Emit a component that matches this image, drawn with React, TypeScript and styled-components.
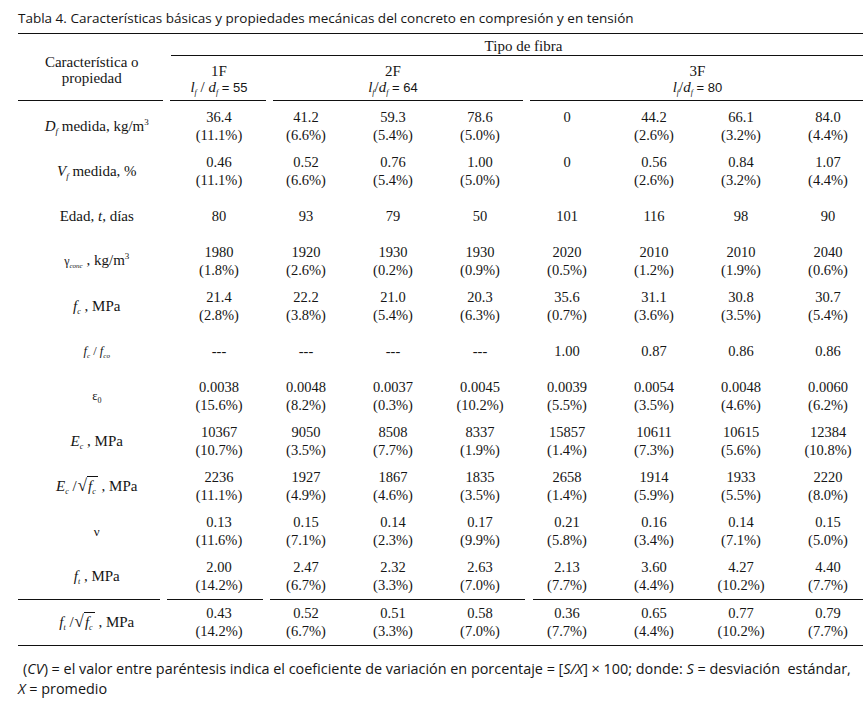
import React from "react";
import styled, { createGlobalStyle } from "styled-components";

const GlobalStyle = createGlobalStyle`
  html, body { margin: 0; padding: 0; background: #fff; }
  body {
    width: 863px;
    height: 703px;
    overflow: hidden;
    color: #151515;
    font-family: "Liberation Serif", "DejaVu Serif", serif;
  }
`;

const INK = "#111";
const SANS = `"Open Sans", "DejaVu Sans", sans-serif`;

const Page = styled.div`
  padding: 10px 0 0 18px;
  width: 845px;
`;

const Title = styled.div`
  font-family: ${SANS};
  font-size: 13.5px;
  line-height: 16px;
  height: 16px;
  white-space: nowrap;
`;

const Table = styled.div`
  margin-top: 7px;
  display: grid;
  grid-template-columns: 157.5px repeat(8, 87px);
  border-top: 1px solid ${INK};
  border-bottom: 1px solid ${INK};
  font-size: 14.5px;
  line-height: 17.5px;
`;

const Rule = styled.div<{ $l?: number; $r?: number }>`
  height: 1px;
  background: ${INK};
  margin-left: ${(p) => p.$l ?? 0}px;
  margin-right: ${(p) => p.$r ?? 0}px;
`;

const HeadLabel = styled.div`
  grid-row: span 2;
  display: flex;
  flex-direction: column;
  text-align: center;
  font-size: 15px;
`;

const HeadLabelText = styled.div`
  flex: 1;
  padding-top: 20px;
  padding-right: 10px;
  line-height: 16px;
`;

const GroupHead = styled.div<{ $span: number | string }>`
  grid-column: ${(p) => (typeof p.$span === "number" ? `span ${p.$span}` : p.$span)};
  display: flex;
  flex-direction: column;
  text-align: center;
  font-size: 15px;
`;

const GroupText = styled.div<{ $pt: number; $pb: number }>`
  padding-top: ${(p) => p.$pt}px;
  padding-bottom: ${(p) => p.$pb}px;
  line-height: 16px;
  white-space: nowrap;
`;

const Ratio = styled.span`
  font-family: "Liberation Sans Narrow", "Liberation Sans", sans-serif;
  font-size: 13px;
`;

const Body = styled.div`
  grid-column: 1 / -1;
  display: grid;
  grid-template-columns: subgrid;
  grid-auto-rows: 45px;
  padding-top: 3px;
`;

const LastBody = styled(Body)`
  padding-top: 0;
`;

const LabelCell = styled.div`
  display: flex;
  align-items: center;
  justify-content: center;
  white-space: nowrap;
  font-size: 15px;
`;

const LabelText = styled.span`
  display: inline-block;
`;

const ValueCell = styled.div`
  display: flex;
  flex-direction: column;
  align-items: center;
  justify-content: center;
  white-space: nowrap;
`;

const RuleCell = styled.div<{ $span: number }>`
  grid-column: span ${(p) => p.$span};
`;

const Sub = styled.sub<{ $size?: number; $upright?: boolean }>`
  font-size: ${(p) => p.$size ?? 9}px;
  font-style: ${(p) => (p.$upright ? "normal" : "italic")};
  vertical-align: -3px;
  line-height: 0;
`;

const Sup = styled.sup`
  font-size: 9px;
  vertical-align: 6px;
  line-height: 0;
`;

const Small = styled.span<{ $size: number }>`
  font-size: ${(p) => p.$size}px;
`;

const Radical = styled.span`
  font-size: 17px;
  margin-left: 1px;
`;

const Radicand = styled.span`
  border-top: 1px solid ${INK};
  padding: 1px 2px 0 1px;
`;

const Note = styled.div`
  margin-top: 13px;
  font-family: ${SANS};
  font-size: 14.4px;
  line-height: 20px;
`;

const NoteLine = styled.div<{ $indent?: boolean }>`
  white-space: pre;
  padding-left: ${(p) => (p.$indent ? 5 : 0)}px;
`;

type Cell = string[];
type Row = { label: React.ReactNode; vals: Cell[] };

const v = (a: string, b?: string): Cell => (b === undefined ? [a] : [a, b]);

const rows: Row[] = [
  {
    label: (
      <>
        <i>D</i>
        <Sub>f</Sub> medida, kg/m<Sup>3</Sup>
      </>
    ),
    vals: [
      v("36.4", "(11.1%)"),
      v("41.2", "(6.6%)"),
      v("59.3", "(5.4%)"),
      v("78.6", "(5.0%)"),
      v("0", ""),
      v("44.2", "(2.6%)"),
      v("66.1", "(3.2%)"),
      v("84.0", "(4.4%)"),
    ],
  },
  {
    label: (
      <>
        <i>V</i>
        <Sub>f</Sub> medida, %
      </>
    ),
    vals: [
      v("0.46", "(11.1%)"),
      v("0.52", "(6.6%)"),
      v("0.76", "(5.4%)"),
      v("1.00", "(5.0%)"),
      v("0", ""),
      v("0.56", "(2.6%)"),
      v("0.84", "(3.2%)"),
      v("1.07", "(4.4%)"),
    ],
  },
  {
    label: (
      <>
        Edad, <i>t</i>, días
      </>
    ),
    vals: ["80", "93", "79", "50", "101", "116", "98", "90"].map((x) => v(x)),
  },
  {
    label: (
      <>
        <Small $size={12}>γ</Small>
        <Sub $size={7}>conc</Sub> , kg/m<Sup>3</Sup>
      </>
    ),
    vals: [
      v("1980", "(1.8%)"),
      v("1920", "(2.6%)"),
      v("1930", "(0.2%)"),
      v("1930", "(0.9%)"),
      v("2020", "(0.5%)"),
      v("2010", "(1.2%)"),
      v("2010", "(1.9%)"),
      v("2040", "(0.6%)"),
    ],
  },
  {
    label: (
      <>
        <i>f</i>
        <Sub $size={8}>c</Sub> , MPa
      </>
    ),
    vals: [
      v("21.4", "(2.8%)"),
      v("22.2", "(3.8%)"),
      v("21.0", "(5.4%)"),
      v("20.3", "(6.3%)"),
      v("35.6", "(0.7%)"),
      v("31.1", "(3.6%)"),
      v("30.8", "(3.5%)"),
      v("30.7", "(5.4%)"),
    ],
  },
  {
    label: (
      <Small $size={12.5}>
        <i>f</i>
        <Sub $size={7}>c</Sub> / <i>f</i>
        <Sub $size={7}>co</Sub>
      </Small>
    ),
    vals: ["---", "---", "---", "---", "1.00", "0.87", "0.86", "0.86"].map((x) => v(x)),
  },
  {
    label: (
      <Small $size={12.5}>
        ε
        <Sub $size={8} $upright>
          0
        </Sub>
      </Small>
    ),
    vals: [
      v("0.0038", "(15.6%)"),
      v("0.0048", "(8.2%)"),
      v("0.0037", "(0.3%)"),
      v("0.0045", "(10.2%)"),
      v("0.0039", "(5.5%)"),
      v("0.0054", "(3.5%)"),
      v("0.0048", "(4.6%)"),
      v("0.0060", "(6.2%)"),
    ],
  },
  {
    label: (
      <>
        <i>E</i>
        <Sub $size={8}>c</Sub> , MPa
      </>
    ),
    vals: [
      v("10367", "(10.7%)"),
      v("9050", "(3.5%)"),
      v("8508", "(7.7%)"),
      v("8337", "(1.9%)"),
      v("15857", "(1.4%)"),
      v("10611", "(7.3%)"),
      v("10615", "(5.6%)"),
      v("12384", "(10.8%)"),
    ],
  },
  {
    label: (
      <>
        <i>E</i>
        <Sub $size={8}>c</Sub> /<Radical>√</Radical>
        <Radicand>
          <i>f</i>
          <Sub $size={8}>c</Sub>
        </Radicand>{" "}
        , MPa
      </>
    ),
    vals: [
      v("2236", "(11.1%)"),
      v("1927", "(4.9%)"),
      v("1867", "(4.6%)"),
      v("1835", "(3.5%)"),
      v("2658", "(1.4%)"),
      v("1914", "(5.9%)"),
      v("1933", "(5.5%)"),
      v("2220", "(8.0%)"),
    ],
  },
  {
    label: <Small $size={13}>ν</Small>,
    vals: [
      v("0.13", "(11.6%)"),
      v("0.15", "(7.1%)"),
      v("0.14", "(2.3%)"),
      v("0.17", "(9.9%)"),
      v("0.21", "(5.8%)"),
      v("0.16", "(3.4%)"),
      v("0.14", "(7.1%)"),
      v("0.15", "(5.0%)"),
    ],
  },
  {
    label: (
      <>
        <i>f</i>
        <Sub $size={8}>t</Sub> , MPa
      </>
    ),
    vals: [
      v("2.00", "(14.2%)"),
      v("2.47", "(6.7%)"),
      v("2.32", "(3.3%)"),
      v("2.63", "(7.0%)"),
      v("2.13", "(7.7%)"),
      v("3.60", "(4.4%)"),
      v("4.27", "(10.2%)"),
      v("4.40", "(7.7%)"),
    ],
  },
];

const lastRow: Row = {
  label: (
    <>
      <i>f</i>
      <Sub $size={8}>t</Sub> /<Radical>√</Radical>
      <Radicand>
        <i>f</i>
        <Sub $size={8}>c</Sub>
      </Radicand>{" "}
      , MPa
    </>
  ),
  vals: [
    v("0.43", "(14.2%)"),
    v("0.52", "(6.7%)"),
    v("0.51", "(3.3%)"),
    v("0.58", "(7.0%)"),
    v("0.36", "(7.7%)"),
    v("0.65", "(4.4%)"),
    v("0.77", "(10.2%)"),
    v("0.79", "(7.7%)"),
  ],
};

const DataRow: React.FC<{ row: Row }> = ({ row }) => (
  <>
    <LabelCell>
      <LabelText>{row.label}</LabelText>
    </LabelCell>
    {row.vals.map((c, i) => (
      <ValueCell key={i}>
        {c.map((line, j) => (
          <span key={j}>{line === "" ? "\u00a0" : line}</span>
        ))}
      </ValueCell>
    ))}
  </>
);

const LD: React.FC<{ n: string }> = ({ n }) => (
  <>
    <i>l</i>
    <Sub $size={8}>f</Sub>
    {n === "55" ? " / " : "/"}
    <i>d</i>
    <Sub $size={8}>f</Sub>
    <Ratio> = {n}</Ratio>
  </>
);

export default function App() {
  return (
    <>
      <GlobalStyle />
      <Page>
        <Title>
          Tabla 4. Características básicas y propiedades mecánicas del concreto en compresión y en tensión
        </Title>
        <Table>
          <HeadLabel>
            <HeadLabelText>
              Característica o
              <br />
              propiedad
            </HeadLabelText>
            <Rule $r={12.5} />
          </HeadLabel>
          <GroupHead $span="2 / -1">
            <GroupText $pt={4} $pb={1}>
              Tipo de fibra
            </GroupText>
            <Rule $l={-4.5} />
          </GroupHead>
          <GroupHead $span={1}>
            <GroupText $pt={7} $pb={4}>
              1F
              <br />
              <LD n="55" />
            </GroupText>
            <Rule $l={-5.5} $r={-3.5} />
          </GroupHead>
          <GroupHead $span={3}>
            <GroupText $pt={7} $pb={4}>
              2F
              <br />
              <LD n="64" />
            </GroupText>
            <Rule $l={10.5} $r={0.5} />
          </GroupHead>
          <GroupHead $span={4}>
            <GroupText $pt={7} $pb={4}>
              3F
              <br />
              <LD n="80" />
            </GroupText>
            <Rule $l={6.5} />
          </GroupHead>

          <Body>
            {rows.map((r, i) => (
              <DataRow key={i} row={r} />
            ))}
          </Body>

          <RuleCell $span={1}>
            <Rule $r={15.5} />
          </RuleCell>
          <RuleCell $span={1}>
            <Rule $l={-8.5} $r={-0.5} />
          </RuleCell>
          <RuleCell $span={3}>
            <Rule $l={7.5} $r={-1.5} />
          </RuleCell>
          <RuleCell $span={4}>
            <Rule $l={9.5} />
          </RuleCell>

          <LastBody>
            <DataRow row={lastRow} />
          </LastBody>
        </Table>
        <Note>
          <NoteLine $indent>
            (<i>CV</i>) = el valor entre paréntesis indica el coeficiente de variación en porcentaje = [
            <i>S/X</i>] × 100; donde: <i>S</i> = desviación  estándar,
          </NoteLine>
          <NoteLine>
            <i>X</i> = promedio
          </NoteLine>
        </Note>
      </Page>
    </>
  );
}
